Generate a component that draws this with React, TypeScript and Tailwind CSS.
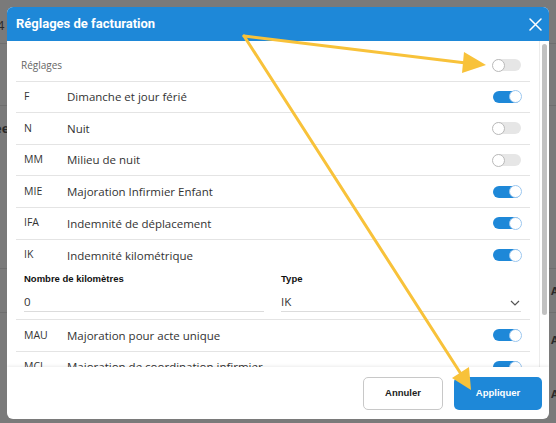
import React from "react";

const BLUE = "bg-[#1e88d8]";

function Toggle({ on }: { on: boolean }) {
  return on ? (
    <span className="relative flex h-[12px] w-[28px] items-center rounded-full bg-[#1e88d8]">
      <span className="absolute right-[-1px] h-[13px] w-[13px] rounded-full border border-[#9cc7ef] bg-white" />
    </span>
  ) : (
    <span className="relative flex h-[12px] w-[28px] items-center rounded-full bg-[#e6e6e6]">
      <span className="absolute left-[-1px] h-[13px] w-[13px] rounded-full border border-[#b9b9b9] bg-white" />
    </span>
  );
}

function Row({ code, label, on, border = true }: { code: string; label: string; on: boolean; border?: boolean }) {
  return (
    <div className={`flex h-[31.6px] shrink-0 items-center pl-[8px] pr-[9px] ${border ? "border-b border-[#e4e4e4]" : ""}`}>
      <span className="w-[43px] text-[10.5px] text-[#333]">{code}</span>
      <span className="flex-1 text-[11.5px] text-[#333]">{label}</span>
      <Toggle on={on} />
    </div>
  );
}

export default function App() {
  return (
    <div className="relative h-[423px] w-[556px] overflow-hidden bg-[#7a7a7a]" style={{ fontFamily: '"Open Sans", sans-serif' }}>
      {/* faint underlying page */}
      <div className="absolute left-0 top-[43px] h-px w-[556px] bg-[#6e6e6e]" />
      <div className="absolute left-0 top-[105px] h-px w-[556px] bg-[#6e6e6e]" />
      <div className="absolute left-0 top-[268px] h-px w-[556px] bg-[#6e6e6e]" />
      <div className="absolute left-0 top-[312px] h-px w-[556px] bg-[#6e6e6e]" />
      <span className="absolute left-[-3px] top-[16px] text-[13px] text-[#2a2a2a]">4</span>
      <span className="absolute left-[-6px] top-[119px] text-[13px] font-bold text-[#2a2a2a]">ee</span>
      <span className="absolute left-[551px] top-[283px] text-[11px] font-bold text-[#2a2a2a]">A</span>
      <span className="absolute left-[551px] top-[332px] text-[11px] font-bold text-[#2a2a2a]">A</span>
      <span className="absolute left-[551px] top-[386px] text-[11px] font-bold text-[#2a2a2a]">A</span>

      <div className="relative ml-[7px] mt-[7px] flex h-[412px] w-[542px] flex-col overflow-hidden rounded-[6px] bg-white">
        {/* header */}
        <div className={`flex h-[34px] shrink-0 items-center justify-between pl-[9px] pr-[7px] ${BLUE}`}>
          <span className="text-[13px] font-bold text-white" style={{ fontFamily: "Roboto, sans-serif" }}>
            Réglages de facturation
          </span>
          <svg width="13" height="13" viewBox="0 0 13 13">
            <path d="M1 1 L12 12 M12 1 L1 12" stroke="white" strokeWidth="1.5" strokeLinecap="round" />
          </svg>
        </div>

        {/* body */}
        <div className="flex h-[326px] shrink-0">
          <div className="flex flex-1 flex-col overflow-hidden pl-[9px] pr-[9px] pt-[9px]">
            <div className="flex h-[31.6px] shrink-0 items-center border-b border-[#e4e4e4] pl-[5px] pr-[9px]">
              <span className="flex-1 text-[10px] text-[#666]">Réglages</span>
              <Toggle on={false} />
            </div>
            <Row code="F" label="Dimanche et jour férié" on />
            <Row code="N" label="Nuit" on={false} />
            <Row code="MM" label="Milieu de nuit" on={false} />
            <Row code="MIE" label="Majoration Infirmier Enfant" on />
            <Row code="IFA" label="Indemnité de déplacement" on />
            <Row code="IK" label="Indemnité kilométrique" on border={false} />
            <div className="flex h-[49px] shrink-0 gap-[17px] border-b border-[#e4e4e4] pl-[8px] pr-[9px]">
              <div className="flex flex-1 flex-col">
                <span className="mt-[1px] text-[9.5px] font-bold leading-[14px] text-[#111]" style={{ fontFamily: '"Liberation Sans", sans-serif' }}>
                  Nombre de kilomètres
                </span>
                <div className="mt-[3px] flex h-[23px] items-center border-b border-[#dcdcdc]">
                  <span className="mt-[2px] text-[11.5px] text-[#333]">0</span>
                </div>
              </div>
              <div className="flex flex-1 flex-col">
                <span className="mt-[1px] text-[9.5px] font-bold leading-[14px] text-[#111]" style={{ fontFamily: '"Liberation Sans", sans-serif' }}>
                  Type
                </span>
                <div className="mt-[3px] flex h-[23px] items-center justify-between border-b border-[#dcdcdc]">
                  <span className="mt-[2px] text-[11.5px] text-[#333]">IK</span>
                  <svg width="10" height="6" viewBox="0 0 10 6" className="mr-[1px] mt-[6px]">
                    <path d="M1 1 L5 5 L9 1" stroke="#555" strokeWidth="1.2" fill="none" />
                  </svg>
                </div>
              </div>
            </div>
            <Row code="MAU" label="Majoration pour acte unique" on />
            <Row code="MCI" label="Majoration de coordination infirmier" on />
          </div>
          <div className="flex w-[10px] shrink-0 justify-center border-l border-[#ececec] pt-[3px]">
            <div className="h-[271px] w-[5px] rounded-full bg-[#c1c1c1]" />
          </div>
        </div>

        {/* footer */}
        <div className="relative flex flex-1 items-center justify-end gap-[11px] pr-[7px] shadow-[0_-1px_3px_rgba(0,0,0,0.08)]" style={{ fontFamily: '"Liberation Sans", sans-serif' }}>
          <button className="h-[33px] w-[80px] rounded-[5px] border border-[#c8c8c8] bg-white text-[9.5px] font-bold text-[#222]">
            Annuler
          </button>
          <button className={`h-[33px] w-[88px] rounded-[5px] text-[9.5px] font-bold text-white ${BLUE}`}>Appliquer</button>
        </div>
      </div>

      {/* annotation arrows */}
      <svg className="pointer-events-none absolute left-0 top-0" width="556" height="423" viewBox="0 0 556 423">
        <g stroke="#f8c23a" strokeWidth="3" strokeLinecap="round" fill="#f8c23a">
          <line x1="244" y1="36" x2="466" y2="63" />
          <line x1="244" y1="36" x2="461" y2="374" />
        </g>
        <polygon points="486,65 464,52 462,73" fill="#f8c23a" />
        <polygon points="471,390 469,367 452,378" fill="#f8c23a" />
      </svg>
    </div>
  );
}
